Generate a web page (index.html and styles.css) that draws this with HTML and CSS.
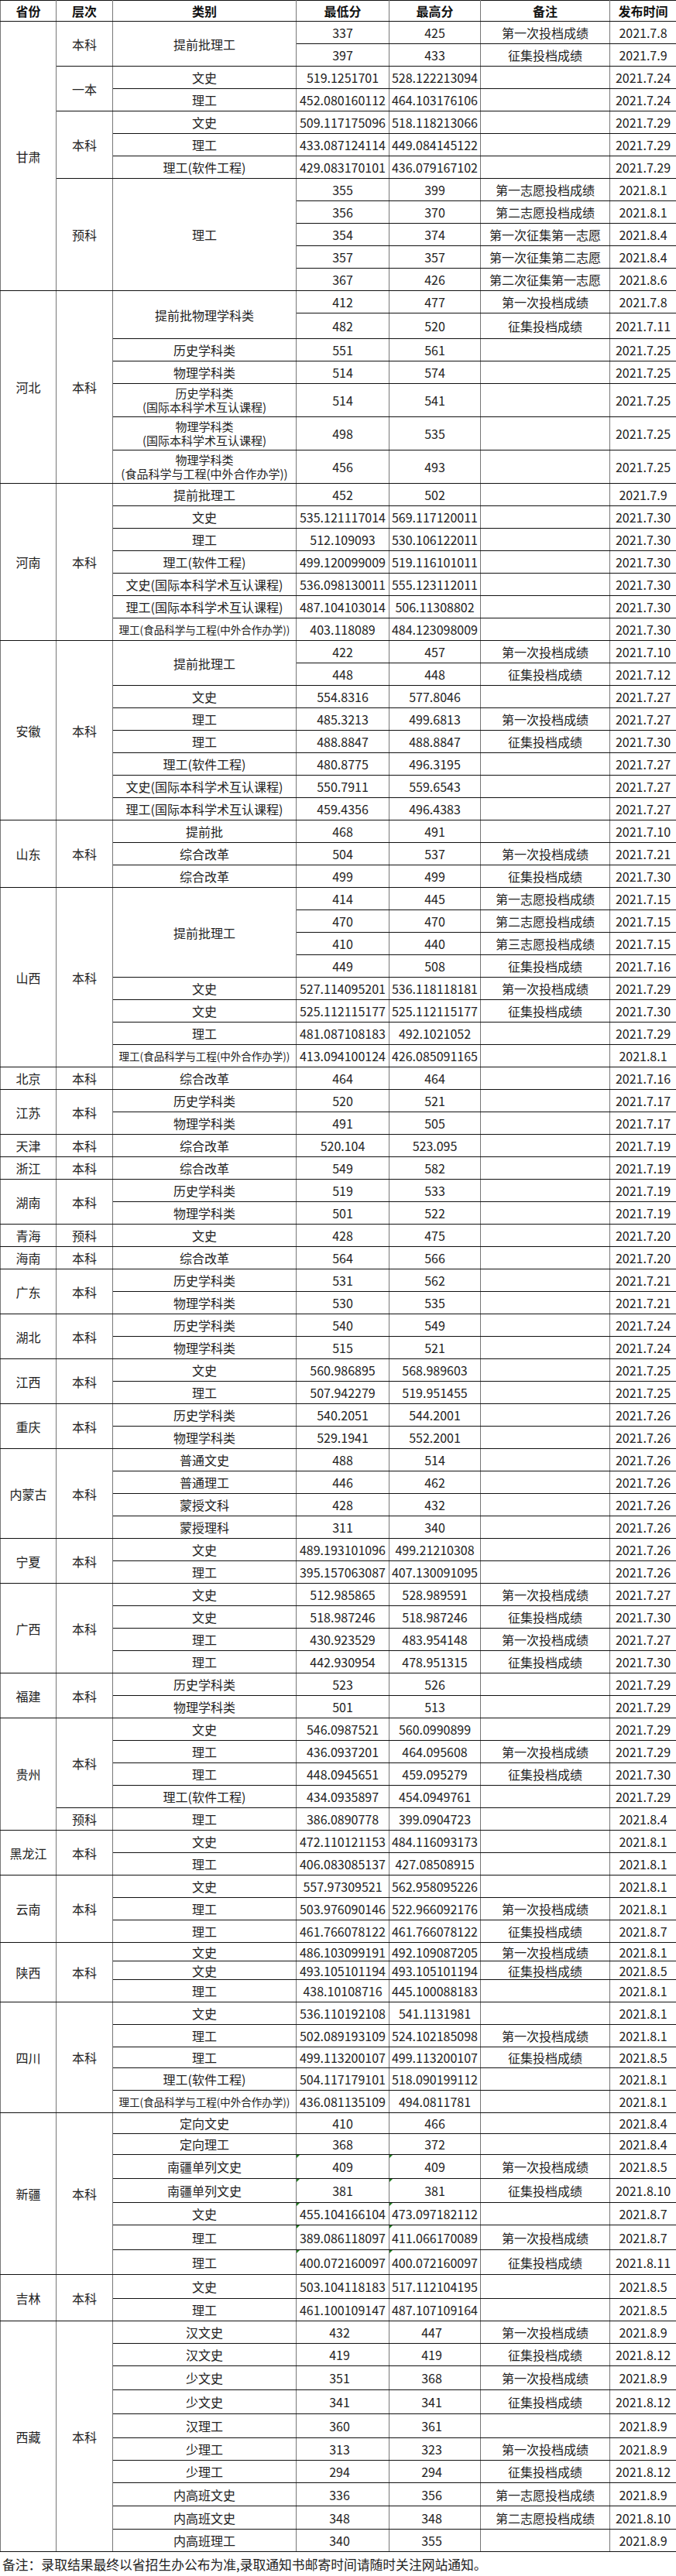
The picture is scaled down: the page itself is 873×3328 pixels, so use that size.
FILE: index.html
```html
<!DOCTYPE html>
<html lang="zh-CN">
<head>
<meta charset="utf-8">
<title>录取分数</title>
<link rel="stylesheet" href="styles.css">
</head>
<body>
<table class="score">
<colgroup>
<col class="w1"><col class="w2"><col class="w3"><col class="w4"><col class="w5"><col class="w6"><col class="w7">
</colgroup>
<thead>
<tr class="head"><th>省份</th><th>层次</th><th>类别</th><th>最低分</th><th>最高分</th><th>备注</th><th>发布时间</th></tr>
</thead>
<tbody>
<!-- 甘肃 -->
<tr><td rowspan="12">甘肃</td><td rowspan="2">本科</td><td rowspan="2">提前批理工</td><td>337</td><td>425</td><td>第一次投档成绩</td><td>2021.7.8</td></tr>
<tr><td>397</td><td>433</td><td>征集投档成绩</td><td>2021.7.9</td></tr>
<tr><td rowspan="2">一本</td><td>文史</td><td>519.1251701</td><td>528.122213094</td><td></td><td>2021.7.24</td></tr>
<tr><td>理工</td><td>452.080160112</td><td>464.103176106</td><td></td><td>2021.7.24</td></tr>
<tr><td rowspan="3">本科</td><td>文史</td><td>509.117175096</td><td>518.118213066</td><td></td><td>2021.7.29</td></tr>
<tr><td>理工</td><td>433.087124114</td><td>449.084145122</td><td></td><td>2021.7.29</td></tr>
<tr><td>理工(软件工程)</td><td>429.083170101</td><td>436.079167102</td><td></td><td>2021.7.29</td></tr>
<tr><td rowspan="5">预科</td><td rowspan="5">理工</td><td>355</td><td>399</td><td>第一志愿投档成绩</td><td>2021.8.1</td></tr>
<tr><td>356</td><td>370</td><td>第二志愿投档成绩</td><td>2021.8.1</td></tr>
<tr><td>354</td><td>374</td><td>第一次征集第一志愿</td><td>2021.8.4</td></tr>
<tr><td>357</td><td>357</td><td>第一次征集第二志愿</td><td>2021.8.4</td></tr>
<tr><td>367</td><td>426</td><td>第二次征集第一志愿</td><td>2021.8.6</td></tr>
<!-- 河北 -->
<tr><td rowspan="7">河北</td><td rowspan="7">本科</td><td rowspan="2">提前批物理学科类</td><td>412</td><td>477</td><td>第一次投档成绩</td><td>2021.7.8</td></tr>
<tr class="h33"><td>482</td><td>520</td><td>征集投档成绩</td><td>2021.7.11</td></tr>
<tr><td>历史学科类</td><td>551</td><td>561</td><td></td><td>2021.7.25</td></tr>
<tr><td>物理学科类</td><td>514</td><td>574</td><td></td><td>2021.7.25</td></tr>
<tr class="h43"><td class="two">历史学科类<br>(国际本科学术互认课程)</td><td>514</td><td>541</td><td></td><td>2021.7.25</td></tr>
<tr class="h43"><td class="two">物理学科类<br>(国际本科学术互认课程)</td><td>498</td><td>535</td><td></td><td>2021.7.25</td></tr>
<tr class="h43"><td class="two">物理学科类<br>(食品科学与工程(中外合作办学))</td><td>456</td><td>493</td><td></td><td>2021.7.25</td></tr>
<!-- 河南 -->
<tr><td rowspan="7">河南</td><td rowspan="7">本科</td><td>提前批理工</td><td>452</td><td>502</td><td></td><td>2021.7.9</td></tr>
<tr><td>文史</td><td>535.121117014</td><td>569.117120011</td><td></td><td>2021.7.30</td></tr>
<tr><td>理工</td><td>512.109093</td><td>530.106122011</td><td></td><td>2021.7.30</td></tr>
<tr><td>理工(软件工程)</td><td>499.120099009</td><td>519.116101011</td><td></td><td>2021.7.30</td></tr>
<tr><td>文史(国际本科学术互认课程)</td><td>536.098130011</td><td>555.123112011</td><td></td><td>2021.7.30</td></tr>
<tr><td>理工(国际本科学术互认课程)</td><td>487.104103014</td><td>506.11308802</td><td></td><td>2021.7.30</td></tr>
<tr><td class="small">理工(食品科学与工程(中外合作办学))</td><td>403.118089</td><td>484.123098009</td><td></td><td>2021.7.30</td></tr>
<!-- 安徽 -->
<tr><td rowspan="8">安徽</td><td rowspan="8">本科</td><td rowspan="2">提前批理工</td><td>422</td><td>457</td><td>第一次投档成绩</td><td>2021.7.10</td></tr>
<tr><td>448</td><td>448</td><td>征集投档成绩</td><td>2021.7.12</td></tr>
<tr><td>文史</td><td>554.8316</td><td>577.8046</td><td></td><td>2021.7.27</td></tr>
<tr><td>理工</td><td>485.3213</td><td>499.6813</td><td>第一次投档成绩</td><td>2021.7.27</td></tr>
<tr><td>理工</td><td>488.8847</td><td>488.8847</td><td>征集投档成绩</td><td>2021.7.30</td></tr>
<tr><td>理工(软件工程)</td><td>480.8775</td><td>496.3195</td><td></td><td>2021.7.27</td></tr>
<tr><td>文史(国际本科学术互认课程)</td><td>550.7911</td><td>559.6543</td><td></td><td>2021.7.27</td></tr>
<tr><td>理工(国际本科学术互认课程)</td><td>459.4356</td><td>496.4383</td><td></td><td>2021.7.27</td></tr>
<!-- 山东 -->
<tr><td rowspan="3">山东</td><td rowspan="3">本科</td><td>提前批</td><td>468</td><td>491</td><td></td><td>2021.7.10</td></tr>
<tr><td>综合改革</td><td>504</td><td>537</td><td>第一次投档成绩</td><td>2021.7.21</td></tr>
<tr><td>综合改革</td><td>499</td><td>499</td><td>征集投档成绩</td><td>2021.7.30</td></tr>
<!-- 山西 -->
<tr><td rowspan="8">山西</td><td rowspan="8">本科</td><td rowspan="4">提前批理工</td><td>414</td><td>445</td><td>第一志愿投档成绩</td><td>2021.7.15</td></tr>
<tr><td>470</td><td>470</td><td>第二志愿投档成绩</td><td>2021.7.15</td></tr>
<tr><td>410</td><td>440</td><td>第三志愿投档成绩</td><td>2021.7.15</td></tr>
<tr><td>449</td><td>508</td><td>征集投档成绩</td><td>2021.7.16</td></tr>
<tr><td>文史</td><td>527.114095201</td><td>536.118118181</td><td>第一次投档成绩</td><td>2021.7.29</td></tr>
<tr><td>文史</td><td>525.112115177</td><td>525.112115177</td><td>征集投档成绩</td><td>2021.7.30</td></tr>
<tr><td>理工</td><td>481.087108183</td><td>492.1021052</td><td></td><td>2021.7.29</td></tr>
<tr><td class="small">理工(食品科学与工程(中外合作办学))</td><td>413.094100124</td><td>426.085091165</td><td></td><td>2021.8.1</td></tr>
<!-- 北京 -->
<tr><td>北京</td><td>本科</td><td>综合改革</td><td>464</td><td>464</td><td></td><td>2021.7.16</td></tr>
<!-- 江苏 -->
<tr><td rowspan="2">江苏</td><td rowspan="2">本科</td><td>历史学科类</td><td>520</td><td>521</td><td></td><td>2021.7.17</td></tr>
<tr><td>物理学科类</td><td>491</td><td>505</td><td></td><td>2021.7.17</td></tr>
<!-- 天津 -->
<tr><td>天津</td><td>本科</td><td>综合改革</td><td>520.104</td><td>523.095</td><td></td><td>2021.7.19</td></tr>
<!-- 浙江 -->
<tr><td>浙江</td><td>本科</td><td>综合改革</td><td>549</td><td>582</td><td></td><td>2021.7.19</td></tr>
<!-- 湖南 -->
<tr><td rowspan="2">湖南</td><td rowspan="2">本科</td><td>历史学科类</td><td>519</td><td>533</td><td></td><td>2021.7.19</td></tr>
<tr><td>物理学科类</td><td>501</td><td>522</td><td></td><td>2021.7.19</td></tr>
<!-- 青海 -->
<tr><td>青海</td><td>预科</td><td>文史</td><td>428</td><td>475</td><td></td><td>2021.7.20</td></tr>
<!-- 海南 -->
<tr><td>海南</td><td>本科</td><td>综合改革</td><td>564</td><td>566</td><td></td><td>2021.7.20</td></tr>
<!-- 广东 -->
<tr><td rowspan="2">广东</td><td rowspan="2">本科</td><td>历史学科类</td><td>531</td><td>562</td><td></td><td>2021.7.21</td></tr>
<tr><td>物理学科类</td><td>530</td><td>535</td><td></td><td>2021.7.21</td></tr>
<!-- 湖北 -->
<tr><td rowspan="2">湖北</td><td rowspan="2">本科</td><td>历史学科类</td><td>540</td><td>549</td><td></td><td>2021.7.24</td></tr>
<tr><td>物理学科类</td><td>515</td><td>521</td><td></td><td>2021.7.24</td></tr>
<!-- 江西 -->
<tr><td rowspan="2">江西</td><td rowspan="2">本科</td><td>文史</td><td>560.986895</td><td>568.989603</td><td></td><td>2021.7.25</td></tr>
<tr><td>理工</td><td>507.942279</td><td>519.951455</td><td></td><td>2021.7.25</td></tr>
<!-- 重庆 -->
<tr><td rowspan="2">重庆</td><td rowspan="2">本科</td><td>历史学科类</td><td>540.2051</td><td>544.2001</td><td></td><td>2021.7.26</td></tr>
<tr><td>物理学科类</td><td>529.1941</td><td>552.2001</td><td></td><td>2021.7.26</td></tr>
<!-- 内蒙古 -->
<tr><td rowspan="4">内蒙古</td><td rowspan="4">本科</td><td>普通文史</td><td>488</td><td>514</td><td></td><td>2021.7.26</td></tr>
<tr><td>普通理工</td><td>446</td><td>462</td><td></td><td>2021.7.26</td></tr>
<tr><td>蒙授文科</td><td>428</td><td>432</td><td></td><td>2021.7.26</td></tr>
<tr><td>蒙授理科</td><td>311</td><td>340</td><td></td><td>2021.7.26</td></tr>
<!-- 宁夏 -->
<tr><td rowspan="2">宁夏</td><td rowspan="2">本科</td><td>文史</td><td>489.193101096</td><td>499.21210308</td><td></td><td>2021.7.26</td></tr>
<tr><td>理工</td><td>395.157063087</td><td>407.130091095</td><td></td><td>2021.7.26</td></tr>
<!-- 广西 -->
<tr><td rowspan="4">广西</td><td rowspan="4">本科</td><td>文史</td><td>512.985865</td><td>528.989591</td><td>第一次投档成绩</td><td>2021.7.27</td></tr>
<tr><td>文史</td><td>518.987246</td><td>518.987246</td><td>征集投档成绩</td><td>2021.7.30</td></tr>
<tr><td>理工</td><td>430.923529</td><td>483.954148</td><td>第一次投档成绩</td><td>2021.7.27</td></tr>
<tr><td>理工</td><td>442.930954</td><td>478.951315</td><td>征集投档成绩</td><td>2021.7.30</td></tr>
<!-- 福建 -->
<tr><td rowspan="2">福建</td><td rowspan="2">本科</td><td>历史学科类</td><td>523</td><td>526</td><td></td><td>2021.7.29</td></tr>
<tr><td>物理学科类</td><td>501</td><td>513</td><td></td><td>2021.7.29</td></tr>
<!-- 贵州 -->
<tr><td rowspan="5">贵州</td><td rowspan="4">本科</td><td>文史</td><td>546.0987521</td><td>560.0990899</td><td></td><td>2021.7.29</td></tr>
<tr><td>理工</td><td>436.0937201</td><td>464.095608</td><td>第一次投档成绩</td><td>2021.7.29</td></tr>
<tr><td>理工</td><td>448.0945651</td><td>459.095279</td><td>征集投档成绩</td><td>2021.7.30</td></tr>
<tr><td>理工(软件工程)</td><td>434.0935897</td><td>454.0949761</td><td></td><td>2021.7.29</td></tr>
<tr><td>预科</td><td>理工</td><td>386.0890778</td><td>399.0904723</td><td></td><td>2021.8.4</td></tr>
<!-- 黑龙江 -->
<tr><td rowspan="2">黑龙江</td><td rowspan="2">本科</td><td>文史</td><td>472.110121153</td><td>484.116093173</td><td></td><td>2021.8.1</td></tr>
<tr><td>理工</td><td>406.083085137</td><td>427.08508915</td><td></td><td>2021.8.1</td></tr>
<!-- 云南 -->
<tr><td rowspan="3">云南</td><td rowspan="3">本科</td><td>文史</td><td>557.97309521</td><td>562.958095226</td><td></td><td>2021.8.1</td></tr>
<tr><td>理工</td><td>503.976090146</td><td>522.966092176</td><td>第一次投档成绩</td><td>2021.8.1</td></tr>
<tr><td>理工</td><td>461.766078122</td><td>461.766078122</td><td>征集投档成绩</td><td>2021.8.7</td></tr>
<!-- 陕西 -->
<tr class="h24"><td rowspan="3">陕西</td><td rowspan="3">本科</td><td>文史</td><td>486.103099191</td><td>492.109087205</td><td>第一次投档成绩</td><td>2021.8.1</td></tr>
<tr class="h24"><td>文史</td><td>493.105101194</td><td>493.105101194</td><td>征集投档成绩</td><td>2021.8.5</td></tr>
<tr><td>理工</td><td>438.10108716</td><td>445.100088183</td><td></td><td>2021.8.1</td></tr>
<!-- 四川 -->
<tr><td rowspan="5">四川</td><td rowspan="5">本科</td><td>文史</td><td>536.110192108</td><td>541.1131981</td><td></td><td>2021.8.1</td></tr>
<tr><td>理工</td><td>502.089193109</td><td>524.102185098</td><td>第一次投档成绩</td><td>2021.8.1</td></tr>
<tr class="h27"><td>理工</td><td>499.113200107</td><td>499.113200107</td><td>征集投档成绩</td><td>2021.8.5</td></tr>
<tr><td>理工(软件工程)</td><td>504.117179101</td><td>518.090199112</td><td></td><td>2021.8.1</td></tr>
<tr><td class="small">理工(食品科学与工程(中外合作办学))</td><td>436.081135109</td><td>494.0811781</td><td></td><td>2021.8.1</td></tr>
<!-- 新疆 -->
<tr class="h27"><td rowspan="7">新疆</td><td rowspan="7">本科</td><td>定向文史</td><td>410</td><td>466</td><td></td><td>2021.8.4</td></tr>
<tr class="h27"><td>定向理工</td><td>368</td><td>372</td><td></td><td>2021.8.4</td></tr>
<tr class="h31"><td>南疆单列文史</td><td class="txt">409</td><td class="txt">409</td><td>第一次投档成绩</td><td>2021.8.5</td></tr>
<tr class="h31"><td>南疆单列文史</td><td class="txt">381</td><td class="txt">381</td><td>征集投档成绩</td><td>2021.8.10</td></tr>
<tr><td>文史</td><td class="txt">455.104166104</td><td class="txt">473.097182112</td><td></td><td>2021.8.7</td></tr>
<tr class="h32"><td>理工</td><td class="txt">389.086118097</td><td class="txt">411.066170089</td><td>第一次投档成绩</td><td>2021.8.7</td></tr>
<tr class="h32"><td>理工</td><td class="txt">400.072160097</td><td class="txt">400.072160097</td><td>征集投档成绩</td><td>2021.8.11</td></tr>
<!-- 吉林 -->
<tr class="h31"><td rowspan="2">吉林</td><td rowspan="2">本科</td><td>文史</td><td>503.104118183</td><td>517.112104195</td><td></td><td>2021.8.5</td></tr>
<tr><td>理工</td><td>461.100109147</td><td>487.107109164</td><td></td><td>2021.8.5</td></tr>
<!-- 西藏 -->
<tr><td rowspan="10">西藏</td><td rowspan="10">本科</td><td>汉文史</td><td class="sh">432</td><td class="sh">447</td><td>第一次投档成绩</td><td>2021.8.9</td></tr>
<tr><td>汉文史</td><td class="sh">419</td><td class="sh">419</td><td>征集投档成绩</td><td>2021.8.12</td></tr>
<tr class="h31"><td>少文史</td><td class="sh">351</td><td class="sh">368</td><td>第一次投档成绩</td><td>2021.8.9</td></tr>
<tr class="h31"><td>少文史</td><td class="sh">341</td><td class="sh">341</td><td>征集投档成绩</td><td>2021.8.12</td></tr>
<tr class="h31"><td>汉理工</td><td class="sh">360</td><td class="sh">361</td><td></td><td>2021.8.9</td></tr>
<tr><td>少理工</td><td class="sh">313</td><td class="sh">323</td><td>第一次投档成绩</td><td>2021.8.9</td></tr>
<tr><td>少理工</td><td class="sh">294</td><td class="sh">294</td><td>征集投档成绩</td><td>2021.8.12</td></tr>
<tr class="h30"><td>内高班文史</td><td class="sh">336</td><td class="sh">356</td><td>第一志愿投档成绩</td><td>2021.8.9</td></tr>
<tr class="h30"><td>内高班文史</td><td class="sh">348</td><td class="sh">348</td><td>第二志愿投档成绩</td><td>2021.8.10</td></tr>
<tr><td>内高班理工</td><td class="sh">340</td><td class="sh">355</td><td></td><td>2021.8.9</td></tr>
</tbody>
</table>
<div class="note">备注：录取结果最终以省招生办公布为准,录取通知书邮寄时间请随时关注网站通知。</div>
</body>
</html>
```

FILE: styles.css
```css
html, body {
  margin: 0;
  padding: 0;
  background: #fff;
}

body {
  width: 873px;
  font-family: "Noto Sans CJK SC", "Noto Sans", sans-serif;
  font-size: 16px;
  color: #222;
}

.score {
  width: 873px;
  table-layout: fixed;
  border-collapse: collapse;
}

.w1 { width: 72px; }
.w2 { width: 73px; }
.w3 { width: 237px; }
.w4 { width: 120px; }
.w5 { width: 118px; }
.w6 { width: 167px; }
.w7 { width: 86px; }

.score th,
.score td {
  border-top: 1px solid #111;
  border-bottom: 1px solid #111;
  border-left: 1px solid #777;
  border-right: 1px solid #777;
  padding: 0;
  text-align: center;
  vertical-align: middle;
  white-space: nowrap;
  line-height: 20px;
  overflow: hidden;
}

.score tr {
  height: 29px;
}

.score tr.head {
  height: 27px;
}

.score th {
  font-weight: 700;
  font-size: 16px;
  color: #111;
}

.score tr.h24 { height: 24px; }
.score tr.h27 { height: 27px; }
.score tr.h30 { height: 30px; }
.score tr.h31 { height: 31px; }
.score tr.h32 { height: 32px; }
.score tr.h33 { height: 33px; }
.score tr.h43 { height: 43px; }

.score td.two {
  font-size: 15px;
  line-height: 18px;
}

.score td.small {
  font-size: 13.5px;
}

.score td.sh {
  padding-right: 8px;
}

.score td.txt {
  position: relative;
}

.score td.txt::before {
  content: "";
  position: absolute;
  top: 0;
  left: 0;
  width: 0;
  height: 0;
  border-top: 4px solid #1f7a1f;
  border-right: 4px solid transparent;
}

.note {
  height: 32px;
  line-height: 32px;
  padding-left: 3px;
  font-size: 16.8px;
  color: #222;
  white-space: nowrap;
}
```
